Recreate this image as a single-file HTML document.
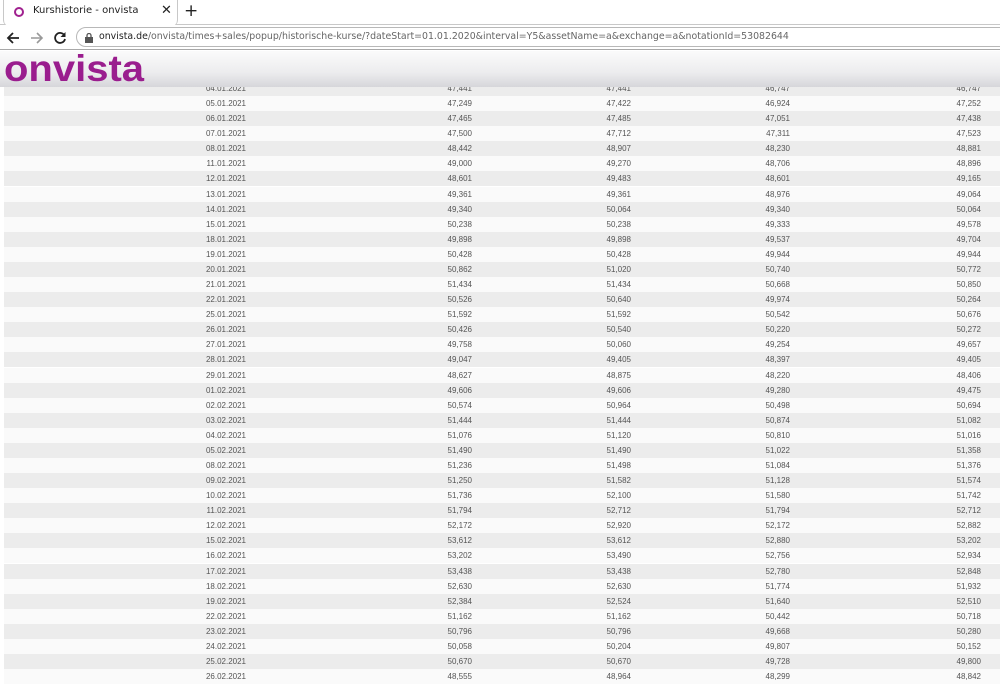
<!DOCTYPE html>
<html><head><meta charset="utf-8">
<style>
*{margin:0;padding:0;box-sizing:border-box}
body{width:1000px;height:689px;overflow:hidden;background:#fff;font-family:"Liberation Sans",Arial,sans-serif;position:relative}
.tabbar{position:absolute;left:0;top:0;width:1000px;height:25px;background:#fff;border-bottom:1px solid #c8c8c8}
.tab{position:absolute;left:3px;top:0;width:175px;height:26px;background:#fff;border:1px solid #c8c8c8;border-top:none;border-bottom:none;border-radius:0 0 6px 6px;}
.tab .ico{position:absolute;left:10px;top:7px;width:10px;height:10px;border:2.5px solid #a0218f;border-radius:50%}
.tab .t{position:absolute;left:29px;top:5px;color:#222;font-family:"DejaVu Sans",sans-serif;font-size:10px}
.tab .x{position:absolute;left:157px;top:3px;font-size:13px;color:#222;font-family:"DejaVu Sans",sans-serif}
.plus{position:absolute;left:184px;top:1px;font-size:17px;color:#222;font-family:"DejaVu Sans",sans-serif}
.nav{position:absolute;left:0;top:25px;width:1000px;height:25px;background:#fff;border-bottom:1px solid #a8a8a8}
.addr{position:absolute;left:76px;top:2px;width:940px;height:20px;border:1px solid #b8b8b8;border-radius:10px;background:#fff}
.url{position:absolute;left:22px;top:3px;font-family:"DejaVu Sans",sans-serif;font-size:9.4px;color:#666;white-space:nowrap}
.url b{font-weight:normal;color:#222}
.hdr{position:absolute;left:0;top:51px;width:1000px;height:36px;background:linear-gradient(#fbfbfb,#ececee 60%,#d6d6da);z-index:2;overflow:hidden}
.logo{position:absolute;left:4px;top:-6px;font-size:40px;font-weight:bold;color:#9a1d8e;transform:scaleY(0.92);transform-origin:0 100%}
.row{position:absolute;left:4px;width:996px;height:15px;font-size:8px;color:#555}
.row span{position:absolute;top:3px;text-align:right;width:80px}
.g{background:#ececec}.w{background:#fafafa}
</style></head><body>
<div class="tabbar"><div class="tab"><div class="ico"></div><div class="t">Kurshistorie - onvista</div><div class="x">✕</div></div><div class="plus">+</div></div>
<div class="nav">
<svg style="position:absolute;left:6px;top:6px" width="14" height="14" viewBox="0 0 14 14"><path d="M13 7H2M7 2L2 7l5 5" stroke="#222" stroke-width="1.8" fill="none"/></svg>
<svg style="position:absolute;left:30px;top:6px" width="14" height="14" viewBox="0 0 14 14"><path d="M1 7h11M7 2l5 5-5 5" stroke="#999" stroke-width="1.6" fill="none"/></svg>
<svg style="position:absolute;left:53px;top:6px" width="14" height="14" viewBox="0 0 14 14"><path d="M11.5 4.5A5 5 0 1 0 12 8" stroke="#222" stroke-width="1.8" fill="none"/><path d="M12.5 1v5h-5z" fill="#222"/></svg>
<div class="addr"><svg style="position:absolute;left:8px;top:5px" width="8" height="10" viewBox="0 0 8 10"><rect x="0" y="4" width="8" height="6" fill="#555"/><path d="M2 4V2.5a2 2 0 0 1 4 0V4" stroke="#555" stroke-width="1.3" fill="none"/></svg>
<div class="url"><b>onvista.de</b>/onvista/times+sales/popup/historische-kurse/?dateStart=01.01.2020&amp;interval=Y5&amp;assetName=a&amp;exchange=a&amp;notationId=53082644</div></div>
</div>
<div class="hdr"><div class="logo">onvista</div></div>
<div id="t"></div>
<script>
var d=[["04.01.2021","47,441","47,441","46,747","46,747"],
["05.01.2021","47,249","47,422","46,924","47,252"],
["06.01.2021","47,465","47,485","47,051","47,438"],
["07.01.2021","47,500","47,712","47,311","47,523"],
["08.01.2021","48,442","48,907","48,230","48,881"],
["11.01.2021","49,000","49,270","48,706","48,896"],
["12.01.2021","48,601","49,483","48,601","49,165"],
["13.01.2021","49,361","49,361","48,976","49,064"],
["14.01.2021","49,340","50,064","49,340","50,064"],
["15.01.2021","50,238","50,238","49,333","49,578"],
["18.01.2021","49,898","49,898","49,537","49,704"],
["19.01.2021","50,428","50,428","49,944","49,944"],
["20.01.2021","50,862","51,020","50,740","50,772"],
["21.01.2021","51,434","51,434","50,668","50,850"],
["22.01.2021","50,526","50,640","49,974","50,264"],
["25.01.2021","51,592","51,592","50,542","50,676"],
["26.01.2021","50,426","50,540","50,220","50,272"],
["27.01.2021","49,758","50,060","49,254","49,657"],
["28.01.2021","49,047","49,405","48,397","49,405"],
["29.01.2021","48,627","48,875","48,220","48,406"],
["01.02.2021","49,606","49,606","49,280","49,475"],
["02.02.2021","50,574","50,964","50,498","50,694"],
["03.02.2021","51,444","51,444","50,874","51,082"],
["04.02.2021","51,076","51,120","50,810","51,016"],
["05.02.2021","51,490","51,490","51,022","51,358"],
["08.02.2021","51,236","51,498","51,084","51,376"],
["09.02.2021","51,250","51,582","51,128","51,574"],
["10.02.2021","51,736","52,100","51,580","51,742"],
["11.02.2021","51,794","52,712","51,794","52,712"],
["12.02.2021","52,172","52,920","52,172","52,882"],
["15.02.2021","53,612","53,612","52,880","53,202"],
["16.02.2021","53,202","53,490","52,756","52,934"],
["17.02.2021","53,438","53,438","52,780","52,848"],
["18.02.2021","52,630","52,630","51,774","51,932"],
["19.02.2021","52,384","52,524","51,640","52,510"],
["22.02.2021","51,162","51,162","50,442","50,718"],
["23.02.2021","50,796","50,796","49,668","50,280"],
["24.02.2021","50,058","50,204","49,807","50,152"],
["25.02.2021","50,670","50,670","49,728","49,800"],
["26.02.2021","48,555","48,964","48,299","48,842"]];
var r=[246,472,631,790,981],h="";
d.forEach(function(x,i){h+='<div class="row '+(i%2?'w':'g')+'" style="top:'+Math.round(81+i*15.08)+'px">';
x.forEach(function(v,j){h+='<span style="left:'+(r[j]-4-80)+'px">'+v+'</span>'});h+='</div>'});
document.getElementById('t').innerHTML=h;
</script>
</body></html>
